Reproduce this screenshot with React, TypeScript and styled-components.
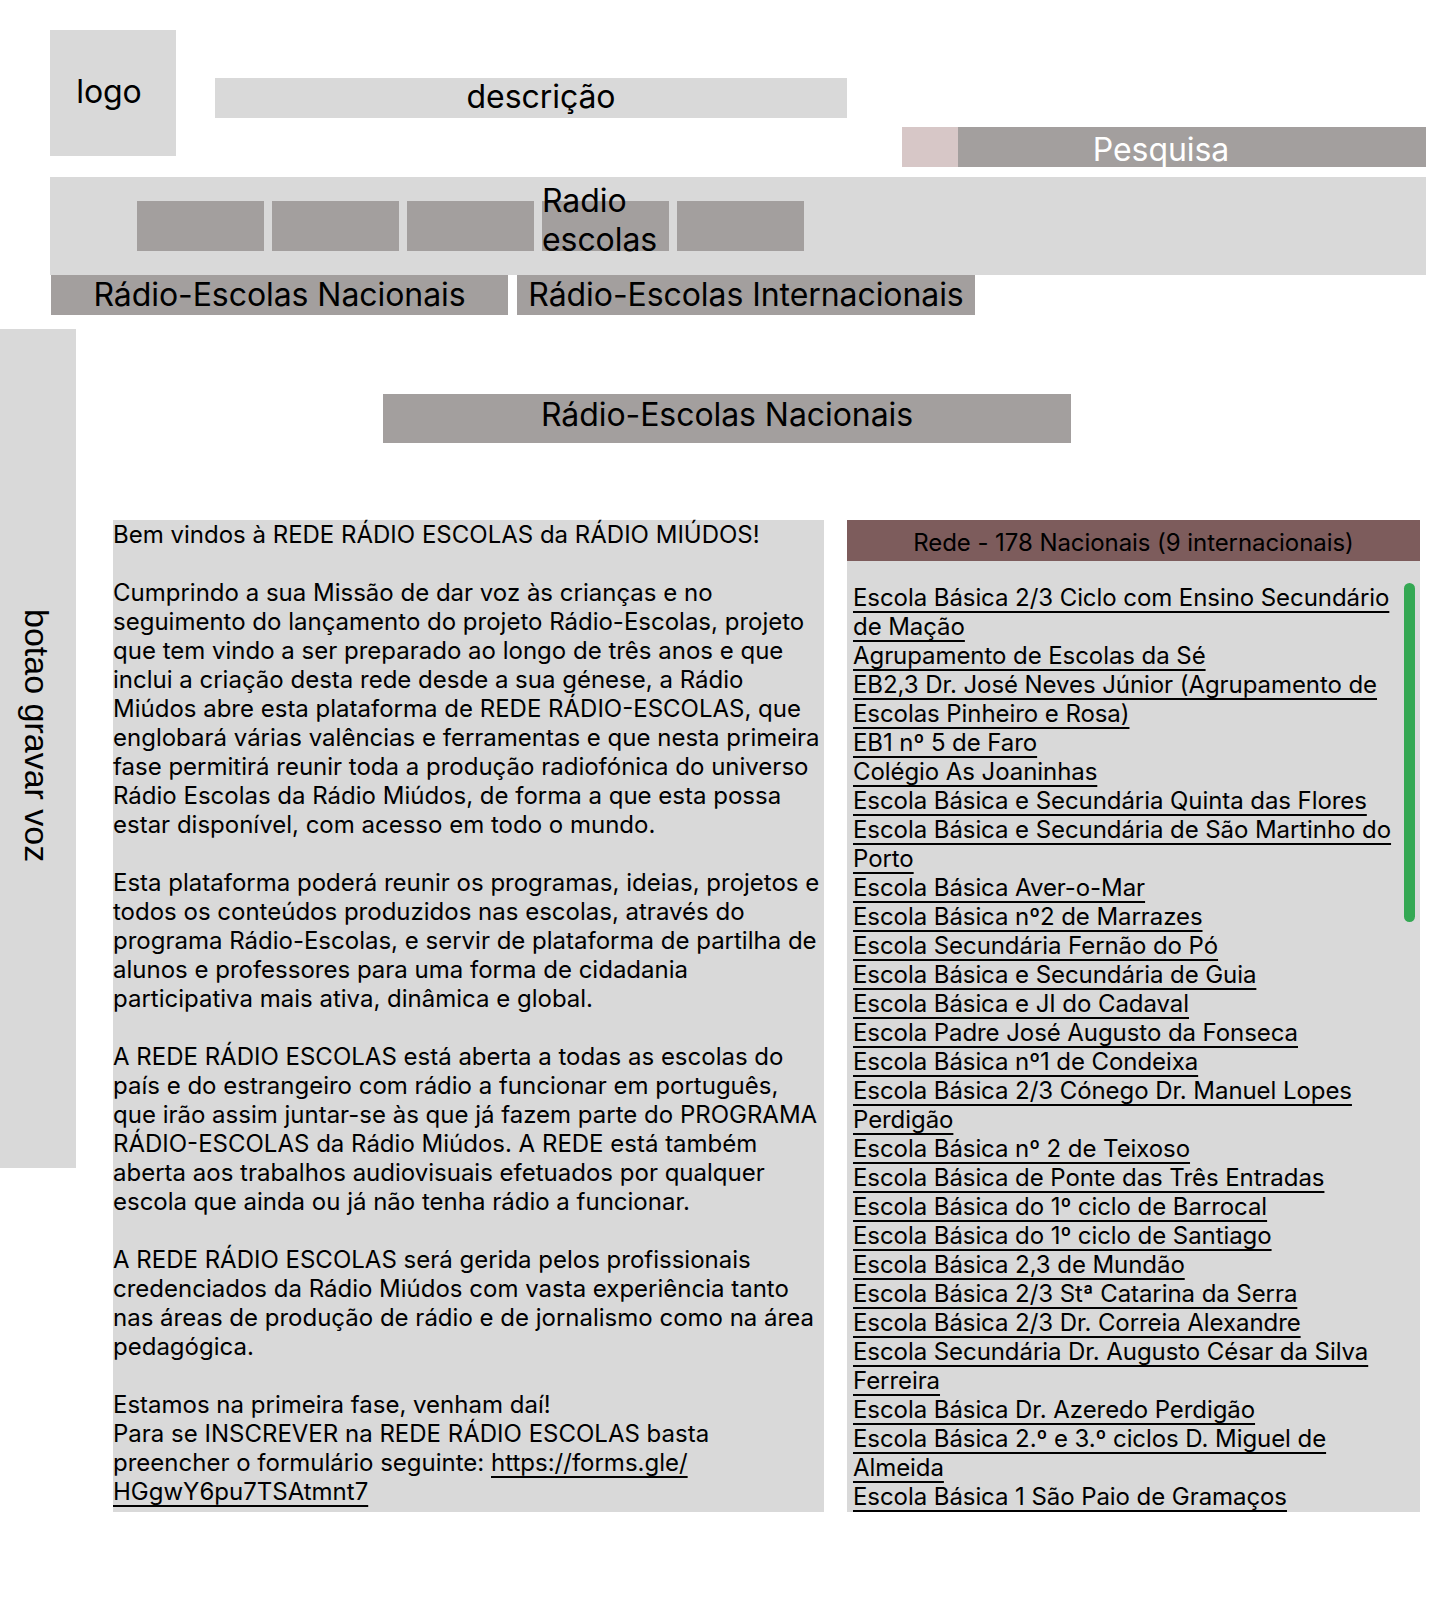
import styled, { createGlobalStyle } from "styled-components";

const GlobalStyle = createGlobalStyle`
  html, body {
    margin: 0;
    padding: 0;
    background: #ffffff;
  }
  body {
    font-family: Inter, "Noto Sans", sans-serif;
    color: #000000;
    letter-spacing: -0.07px;
  }
  * {
    box-sizing: border-box;
  }
`;

const LIGHT = "#d9d9d9";
const DARK = "#a39f9e";

const schools: string[] = [
  "Escola Básica 2/3 Ciclo com Ensino Secundário de Mação",
  "Agrupamento de Escolas da Sé",
  "EB2,3 Dr. José Neves Júnior (Agrupamento de Escolas Pinheiro e Rosa)",
  "EB1 nº 5 de Faro",
  "Colégio As Joaninhas",
  "Escola Básica e Secundária Quinta das Flores",
  "Escola Básica e Secundária de São Martinho do Porto",
  "Escola Básica Aver-o-Mar",
  "Escola Básica nº2 de Marrazes",
  "Escola Secundária Fernão do Pó",
  "Escola Básica e Secundária de Guia",
  "Escola Básica e JI do Cadaval",
  "Escola Padre José Augusto da Fonseca",
  "Escola Básica nº1 de Condeixa",
  "Escola Básica 2/3 Cónego Dr. Manuel Lopes Perdigão",
  "Escola Básica nº 2 de Teixoso",
  "Escola Básica de Ponte das Três Entradas",
  "Escola Básica do 1º ciclo de Barrocal",
  "Escola Básica do 1º ciclo de Santiago",
  "Escola Básica 2,3 de Mundão",
  "Escola Básica 2/3 Stª Catarina da Serra",
  "Escola Básica 2/3 Dr. Correia Alexandre",
  "Escola Secundária Dr. Augusto César da Silva Ferreira",
  "Escola Básica Dr. Azeredo Perdigão",
  "Escola Básica 2.º e 3.º ciclos D. Miguel de Almeida",
  "Escola Básica 1 São Paio de Gramaços",
];

export default function App() {
  return (
    <>
      <GlobalStyle />
      <Page>
        <Header>
          <Logo>logo</Logo>
          <Description>descrição</Description>
          <Search>
            <SearchIcon />
            <SearchField>Pesquisa</SearchField>
          </Search>
        </Header>

        <NavBar>
          <NavItem />
          <NavItem />
          <NavItem />
          <NavItem>
            <NavLabel>
              Radio
              <br />
              escolas
            </NavLabel>
          </NavItem>
          <NavItem />
        </NavBar>

        <Tabs>
          <Tab $width={457}>Rádio-Escolas Nacionais</Tab>
          <Tab $width={458}>Rádio-Escolas Internacionais</Tab>
        </Tabs>

        <Main>
          <RecordButton>
            <RecordLabel>botao gravar voz</RecordLabel>
          </RecordButton>

          <Content>
            <SectionTitle>Rádio-Escolas Nacionais</SectionTitle>

            <Panels>
              <IntroPanel>
                <Paragraph>Bem vindos à REDE RÁDIO ESCOLAS da RÁDIO MIÚDOS!</Paragraph>
                <Paragraph>
                  Cumprindo a sua Missão de dar voz às crianças e no seguimento do
                  lançamento do projeto Rádio-Escolas, projeto que tem vindo a ser
                  preparado ao longo de três anos e que inclui a criação desta rede
                  desde a sua génese, a Rádio Miúdos abre esta plataforma de REDE
                  RÁDIO-ESCOLAS, que englobará várias valências e ferramentas e que
                  nesta primeira fase permitirá reunir toda a produção radiofónica do
                  universo Rádio Escolas da Rádio Miúdos, de forma a que esta possa
                  estar disponível, com acesso em todo o mundo.
                </Paragraph>
                <Paragraph>
                  Esta plataforma poderá reunir os programas, ideias, projetos e todos
                  os conteúdos produzidos nas escolas, através do programa
                  Rádio-Escolas, e servir de plataforma de partilha de alunos e
                  professores para uma forma de cidadania participativa mais ativa,
                  dinâmica e global.
                </Paragraph>
                <Paragraph>
                  A REDE RÁDIO ESCOLAS está aberta a todas as escolas do país e do
                  estrangeiro com rádio a funcionar em português, que irão assim
                  juntar-se às que já fazem parte do PROGRAMA RÁDIO-ESCOLAS da Rádio
                  Miúdos. A REDE está também aberta aos trabalhos audiovisuais
                  efetuados por qualquer escola que ainda ou já não tenha rádio a
                  funcionar.
                </Paragraph>
                <Paragraph>
                  A REDE RÁDIO ESCOLAS será gerida pelos profissionais credenciados da
                  Rádio Miúdos com vasta experiência tanto nas áreas de produção de
                  rádio e de jornalismo como na área pedagógica.
                </Paragraph>
                <Paragraph>
                  Estamos na primeira fase, venham daí!
                  <br />
                  Para se INSCREVER na REDE RÁDIO ESCOLAS basta preencher o formulário
                  seguinte:{" "}
                  <TextLink href="#">
                    https://forms.gle/
                    <br />
                    HGgwY6pu7TSAtmnt7
                  </TextLink>
                </Paragraph>
              </IntroPanel>

              <NetworkPanel>
                <NetworkHeader>Rede - 178 Nacionais (9 internacionais)</NetworkHeader>
                <NetworkBody>
                  <SchoolList>
                    {schools.map((name) => (
                      <SchoolItem key={name}>
                        <SchoolLink href="#">{name}</SchoolLink>
                      </SchoolItem>
                    ))}
                  </SchoolList>
                  <ScrollTrack>
                    <ScrollThumb />
                  </ScrollTrack>
                </NetworkBody>
              </NetworkPanel>
            </Panels>
          </Content>
        </Main>
      </Page>
    </>
  );
}

const Page = styled.div`
  width: 1447px;
  min-height: 1624px;
  padding-top: 30px;
`;

const Header = styled.header`
  display: flex;
  align-items: flex-start;
  padding-left: 50px;
`;

const Logo = styled.div`
  width: 126px;
  height: 126px;
  background: ${LIGHT};
  display: flex;
  align-items: center;
  justify-content: center;
  padding: 0 8px 4px 0;
  font-size: 32px;
`;

const Description = styled.div`
  width: 632px;
  height: 40px;
  margin: 48px 0 0 39px;
  background: ${LIGHT};
  text-align: center;
  padding-left: 20px;
  font-size: 32px;
  line-height: 37px;
`;

const Search = styled.div`
  display: flex;
  width: 524px;
  height: 40px;
  margin: 97px 0 0 55px;
`;

const SearchIcon = styled.div`
  width: 56px;
  flex-shrink: 0;
  background: #d7c7c7;
`;

const SearchField = styled.div`
  flex: 1;
  background: ${DARK};
  color: #ffffff;
  text-align: center;
  padding: 3px 62px 0 0;
  font-size: 32px;
  white-space: nowrap;
`;

const NavBar = styled.nav`
  display: flex;
  gap: 8px;
  width: 1376px;
  height: 98px;
  margin: 10px 0 0 50px;
  padding: 24px 0 0 87px;
  background: ${LIGHT};
`;

const NavItem = styled.div`
  position: relative;
  width: 127px;
  height: 50px;
  background: ${DARK};
`;

const NavLabel = styled.span`
  position: absolute;
  left: 0;
  top: -20px;
  font-size: 32px;
  white-space: nowrap;
`;

const Tabs = styled.div`
  display: flex;
  gap: 9px;
  padding-left: 51px;
`;

const Tab = styled.div<{ $width: number }>`
  width: ${(p) => p.$width}px;
  height: 40px;
  background: ${DARK};
  font-size: 32px;
  text-align: center;
  white-space: nowrap;
`;

const Main = styled.main`
  display: flex;
  align-items: flex-start;
`;

const RecordButton = styled.aside`
  width: 76px;
  height: 839px;
  margin-top: 14px;
  flex-shrink: 0;
  background: ${LIGHT};
  display: flex;
  justify-content: center;
  padding: 280px 4px 0 0;
`;

const RecordLabel = styled.span`
  writing-mode: vertical-rl;
  font-family: "Liberation Sans", Arial, sans-serif;
  font-size: 34px;
  letter-spacing: 0;
  white-space: nowrap;
`;

const Content = styled.section`
  margin-left: 37px;
`;

const SectionTitle = styled.h2`
  width: 688px;
  height: 49px;
  margin: 79px 0 0 270px;
  padding-top: 1px;
  background: ${DARK};
  font-size: 32px;
  font-weight: 400;
  text-align: center;
`;

const Panels = styled.div`
  display: flex;
  gap: 23px;
  margin-top: 77px;
`;

const IntroPanel = styled.article`
  width: 711px;
  height: 992px;
  background: ${LIGHT};
  font-size: 24px;
  line-height: 29px;
  letter-spacing: 0;
`;

const Paragraph = styled.p`
  margin: 0 0 29px;
`;

const TextLink = styled.a`
  color: #000000;
  text-decoration: underline;
  text-decoration-thickness: 1.5px;
  text-underline-offset: 5px;
  text-decoration-skip-ink: none;
`;

const NetworkPanel = styled.div`
  width: 573px;
  height: 992px;
  background: ${LIGHT};
  display: flex;
  flex-direction: column;
`;

const NetworkHeader = styled.div`
  height: 41px;
  flex-shrink: 0;
  padding-top: 3px;
  background: #7d5c5c;
  display: flex;
  align-items: center;
  justify-content: center;
  font-size: 24px;
`;

const NetworkBody = styled.div`
  flex: 1;
  min-height: 0;
  display: flex;
  gap: 3px;
  padding: 22px 5px 0 6px;
  overflow: hidden;
`;

const SchoolList = styled.ul`
  width: 548px;
  margin: 0;
  padding: 0;
  list-style: none;
  font-size: 24px;
  line-height: 29px;
`;

const SchoolItem = styled.li`
  margin: 0;
`;

const SchoolLink = styled(TextLink)``;

const ScrollTrack = styled.div`
  width: 11px;
  flex-shrink: 0;
`;

const ScrollThumb = styled.div`
  width: 11px;
  height: 339px;
  border-radius: 6px;
  background: #34a853;
`;
